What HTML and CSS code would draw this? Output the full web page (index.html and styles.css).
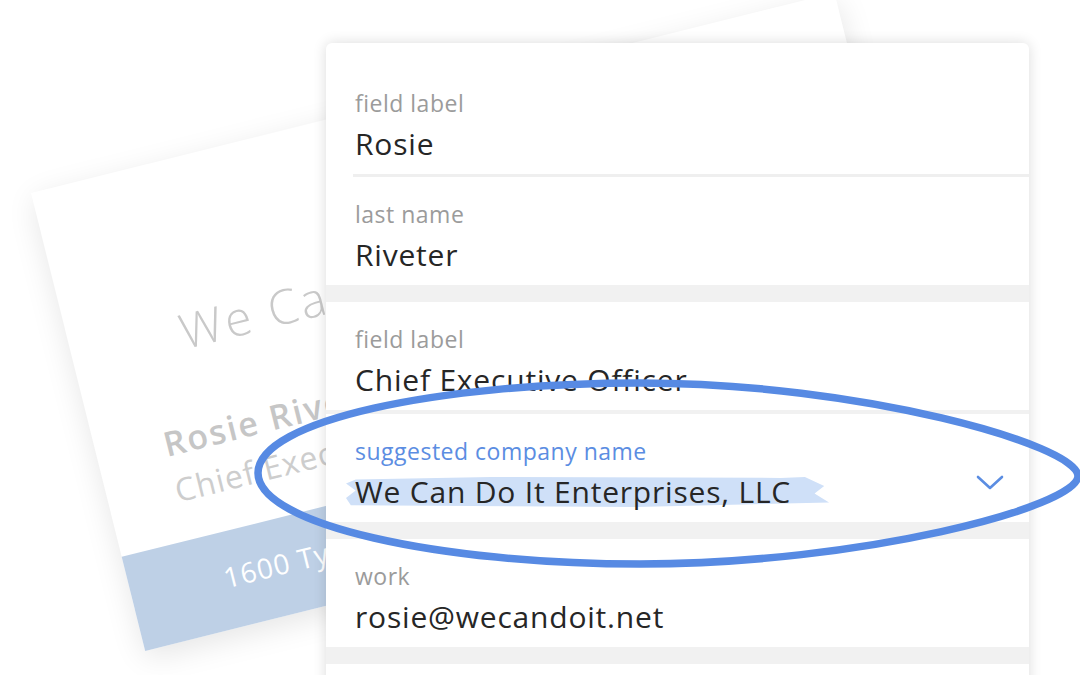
FILE: index.html
```html
<!DOCTYPE html>
<html lang="en">
<head>
    <meta charset="UTF-8">
    <meta name="viewport" content="width=device-width, initial-scale=1.0">
    <title>Contact Card</title>
    <link rel="stylesheet" href="styles.css">
</head>
<body>
    <div class="stage">
        <!-- business card lying behind the form -->
        <div class="card">
            <div class="card-logo">We Can Do It</div>
            <div class="card-name">Rosie Riveter</div>
            <div class="card-title">Chief Executive Officer</div>
            <div class="card-foot">1600 Tyler Street, Richmond</div>
        </div>

        <main class="panel">
            <div class="field">
                <div class="field-label">field label</div>
                <div class="field-value">Rosie</div>
            </div>
            <div class="rule"></div>
            <div class="field">
                <div class="field-label">last name</div>
                <div class="field-value">Riveter</div>
            </div>
            <div class="band"></div>
            <div class="field">
                <div class="field-label">field label</div>
                <div class="field-value">Chief Executive Officer</div>
            </div>
            <div class="band band-thin"></div>
            <div class="field field-select">
                <div class="field-body">
                    <div class="field-label field-label-active">suggested company name</div>
                    <div class="field-value"><span class="marker">We Can Do It Enterprises, LLC</span></div>
                </div>
                <svg class="chevron" width="28" height="16" viewBox="0 0 28 16">
                    <path d="M2 2 L14 13 L26 2" fill="none" stroke="#5b8de2" stroke-width="2.6" stroke-linecap="round" stroke-linejoin="round"/>
                </svg>
            </div>
            <div class="band"></div>
            <div class="field">
                <div class="field-label">work</div>
                <div class="field-value">rosie@wecandoit.net</div>
            </div>
            <div class="band"></div>
            <div class="field field-empty"></div>
        </main>

        <!-- hand drawn circle around the suggestion -->
        <svg class="scribble" width="1080" height="675" viewBox="0 0 1080 675">
            <path d="M258 473 C258 420, 440 383, 640 383 C860 383, 1078 445, 1078 476 C1078 507, 860 564, 640 564 C440 564, 258 525, 258 473 Z"
                  fill="none" stroke="#578ae3" stroke-width="7.5"/>
        </svg>
    </div>
</body>
</html>
```

FILE: styles.css
```css
body {
    margin: 0;
    background-color: #fff;
    font-family: "Open Sans", "Noto Sans", sans-serif;
}

.stage {
    position: relative;
    width: 1080px;
    height: 675px;
    overflow: hidden;
}

/* card */

.card {
    position: absolute;
    left: 31px;
    top: 193px;
    width: 828px;
    height: 472px;
    transform: rotate(-14deg);
    transform-origin: 0 0;
    background-color: #fff;
    box-shadow: 0 8px 30px rgba(0, 0, 0, 0.10);
    display: flex;
    flex-direction: column;
    padding-left: 68px;
    box-sizing: border-box;
    z-index: 0;
}

.card-logo {
    margin-top: 143px;
    padding-left: 43px;
    font-size: 48px;
    line-height: 56px;
    font-weight: 300;
    letter-spacing: 3px;
    color: #c9c9c9;
}

.card-name {
    margin-top: 57px;
    font-size: 34px;
    line-height: 40px;
    font-weight: 600;
    letter-spacing: 2px;
    color: #c6c6c6;
}

.card-title {
    margin-top: 9px;
    font-size: 32px;
    line-height: 38px;
    letter-spacing: 1px;
    color: #cdcdcd;
}

.card-foot {
    margin-top: auto;
    margin-left: -68px;
    height: 97px;
    padding: 29px 0 0 94px;
    box-sizing: border-box;
    background-color: #bed0e6;
    color: #fff;
    font-size: 28px;
    line-height: 32px;
    letter-spacing: 1px;
}

/* form panel */

.panel {
    position: relative;
    z-index: 1;
    margin: 43px 0 0 326px;
    width: 703px;
    height: 700px;
    padding-top: 23px;
    box-sizing: border-box;
    background-color: #fff;
    border-radius: 6px 6px 0 0;
    box-shadow: 0 0 14px rgba(0, 0, 0, 0.14);
}

.field {
    padding: 24px 25px 12px 29px;
}

.field-label {
    font-size: 23px;
    line-height: 26px;
    letter-spacing: 0.5px;
    color: #9b9b9b;
}

.field-label-active {
    color: #5b8de2;
}

.field-value {
    margin-top: 10px;
    font-size: 30px;
    line-height: 36px;
    letter-spacing: 0.8px;
    color: #262626;
}

.field-select {
    display: flex;
    align-items: center;
}

.field-body {
    flex: 1;
}

.chevron {
    margin-top: 18px;
}

.field-empty {
    height: 60px;
}

.marker {
    position: relative;
    z-index: 0;
}

.marker::before {
    content: "";
    position: absolute;
    left: -9px;
    right: -38px;
    top: 6px;
    bottom: 5px;
    z-index: -1;
    background-color: #cfe0f8;
    clip-path: polygon(2% 8%, 30% 0, 90% 3%, 95% 0, 99% 30%, 97% 55%, 100% 85%, 60% 100%, 1% 94%, 0 70%, 2% 45%, 0 22%);
}

.rule {
    height: 3px;
    margin-left: 27px;
    background-color: #efefef;
}

.band {
    height: 17px;
    background-color: #f1f1f1;
}

.band-thin {
    height: 4px;
}

.scribble {
    position: absolute;
    left: 0;
    top: 0;
    z-index: 2;
    pointer-events: none;
}
```
